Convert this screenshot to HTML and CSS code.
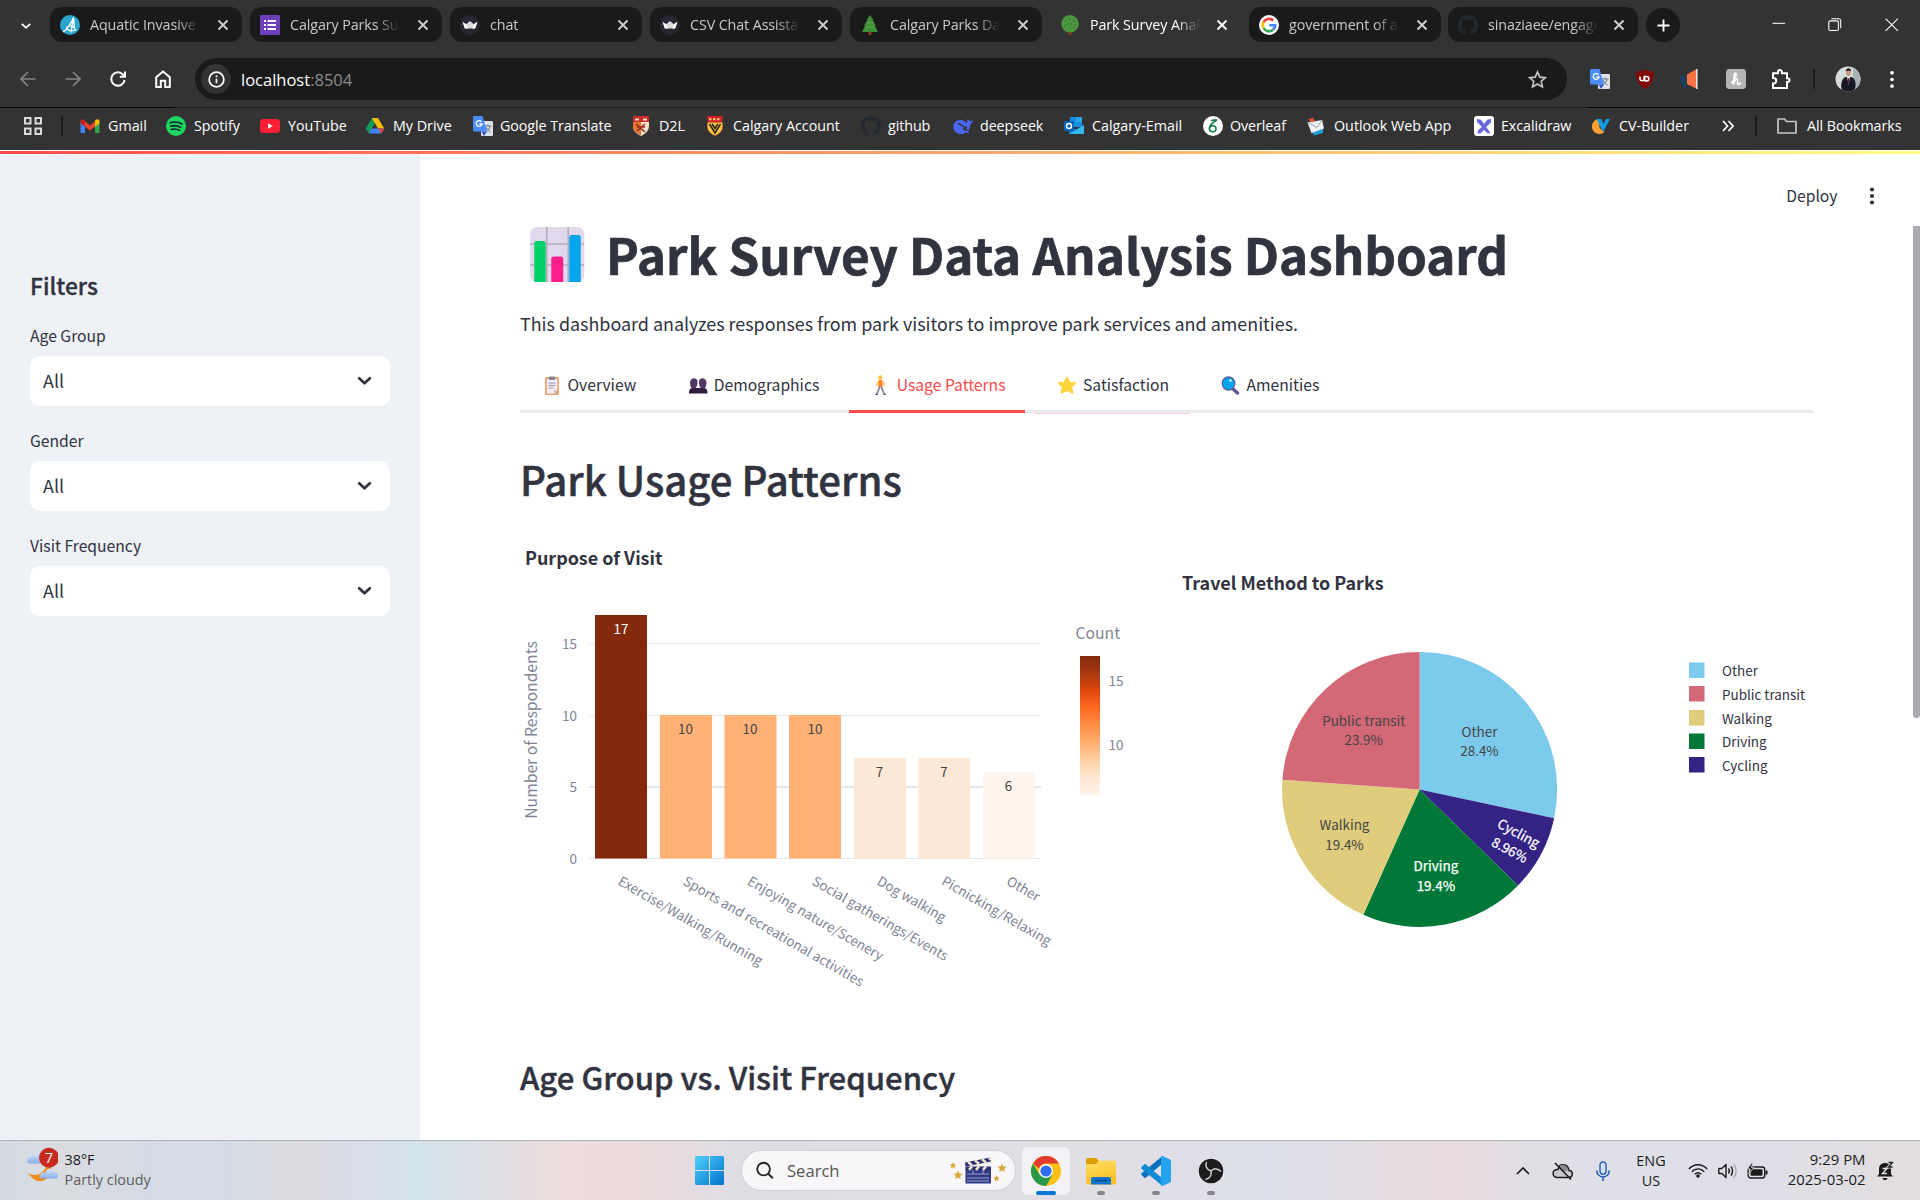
FILE: index.html
```html
<!DOCTYPE html>
<html lang="en">
<head>
<meta charset="utf-8">
<title>Park Survey Analysis</title>
<link rel="stylesheet" href="styles.css">
</head>
<body>
<svg class="defs" aria-hidden="true">
  <defs>
    <symbol id="i-close" viewBox="0 0 12 12"><path d="M1.5 1.5l9 9M10.5 1.5l-9 9" fill="none" stroke="currentColor" stroke-width="1.9"/></symbol>
    <symbol id="i-chev" viewBox="0 0 14 9"><path d="M2 2l5 4.6L12 2" fill="none" stroke="currentColor" stroke-width="2.6" stroke-linecap="round" stroke-linejoin="round"/></symbol>
    <symbol id="i-crown" viewBox="0 0 20 20"><circle cx="10" cy="10" r="10" fill="#262730"/><path d="M2.6 7l3.6 2.3L10 6l3.8 3.3L17.4 7l-2.3 6.6H4.9z" fill="#dcdcdc"/><path d="M2.6 7l3.6 2.3L7.8 13.6H4.9zM17.4 7l-3.6 2.3-1.6 4.3h2.9z" fill="#fff"/></symbol>
    <symbol id="i-github" viewBox="0 0 16 16"><path fill="#24292f" d="M8 0C3.58 0 0 3.58 0 8c0 3.54 2.29 6.53 5.47 7.59.4.07.55-.17.55-.38 0-.19-.01-.82-.01-1.49-2.01.37-2.53-.49-2.69-.94-.09-.23-.48-.94-.82-1.13-.28-.15-.68-.52-.01-.53.63-.01 1.08.58 1.23.82.72 1.21 1.87.87 2.33.66.07-.52.28-.87.51-1.07-1.78-.2-3.64-.89-3.64-3.95 0-.87.31-1.59.82-2.15-.08-.2-.36-1.02.08-2.12 0 0 .67-.21 2.2.82.64-.18 1.32-.27 2-.27s1.36.09 2 .27c1.53-1.04 2.2-.82 2.2-.82.44 1.1.16 1.92.08 2.12.51.56.82 1.27.82 2.15 0 3.07-1.87 3.75-3.65 3.95.29.25.54.73.54 1.48 0 1.07-.01 1.93-.01 2.2 0 .21.15.46.55.38A8.01 8.01 0 0 0 16 8c0-4.42-3.58-8-8-8z"/></symbol>
    <symbol id="i-translate" viewBox="0 0 20 20"><rect x="8" y="5" width="12" height="15" rx="1.2" fill="#dfe3e8"/><path d="M11.5 10h7M15 8.4V10M17.3 10c-.6 2.6-2.4 4.800-4.300 6M12.900 11.300c.9 2 2.600 3.800 4.600 4.700" stroke="#6f7f8c" stroke-width="1.1" fill="none"/><path d="M1.200 0h8.300l4.500 15.500H1.200A1.200 1.200 0 0 1 0 14.300V1.200A1.200 1.200 0 0 1 1.200 0z" fill="#4a8df6"/><path d="M8.500 15.500H14L11 20z" fill="#3457c5"/><path d="M8.400 5.600A2.900 2.900 0 1 0 9 8H6.300" stroke="#fff" stroke-width="1.300" fill="none"/></symbol>
    <symbol id="i-crest" viewBox="0 0 18 20"><path d="M1 0h16l-1 6 1 4c0 5-4 8-8 10-4-2-8-5-8-10l1-4z" fill="#d4202a"/><path d="M1.500 6.500h15V11c0 4-4 7-7.500 8.600C5.500 18 1.500 15 1.500 11z" fill="#f3c53a"/><path d="M3.500 8l5.500 9 5.500-9M6.200 8L9 12.500 11.800 8" stroke="#2a2114" stroke-width="1.500" fill="none"/><path d="M3 3.300h12" stroke="#f3d06a" stroke-width="2" stroke-dasharray="2.500 1.500"/></symbol>
    <symbol id="i-shield" viewBox="0 0 18 20"><path d="M1 0h16v10c0 5-4 8-8 10-4-2-8-5-8-10z" fill="#f1e3c8"/><path d="M1 0h16v6H1z" fill="#c52b2f"/><path d="M3 2.500h4v2H3zM11 2.500h4v2h-4z" fill="#f5d9b0"/><path d="M9 6v13.500C5 17.600 1.300 14.700 1 10V6z" fill="#e3762d"/><path d="M4 8l9 8M13 8l-8 7M5 11h8" stroke="#9b2a24" stroke-width="1.600"/></symbol>
    <linearGradient id="g-win" x1="0" y1="0" x2="1" y2="1"><stop offset="0" stop-color="#4fd0f8"/><stop offset="1" stop-color="#0072d0"/></linearGradient>
    <linearGradient id="g-fold" x1="0" y1="0" x2="0.300" y2="1"><stop offset="0" stop-color="#ffdf6b"/><stop offset="1" stop-color="#fdc022"/></linearGradient>
    <linearGradient id="g-heat" x1="0" y1="0" x2="0" y2="1"><stop offset="0" stop-color="#832a0d"/><stop offset=".125" stop-color="#a8390f"/><stop offset=".25" stop-color="#e0480c"/><stop offset=".375" stop-color="#fd6a20"/><stop offset=".5" stop-color="#ff9045"/><stop offset=".625" stop-color="#ffae70"/><stop offset=".75" stop-color="#fed0a5"/><stop offset=".875" stop-color="#fee6d0"/><stop offset="1" stop-color="#fff4ea"/></linearGradient>
    <linearGradient id="g-cloud" x1="0" y1="0" x2="0" y2="1"><stop offset="0" stop-color="#d7e6fb"/><stop offset="1" stop-color="#87abea"/></linearGradient>
  </defs>
</svg>

<header class="browser">
  <div class="tabstrip">
    <svg class="tab-search" viewBox="0 0 14 9"><path d="M2 2l5 4.600L12 2" fill="none" stroke="#fff" stroke-width="2.200"/></svg>
    <div class="tab"><svg class="fav" viewBox="0 0 20 20"><circle cx="10" cy="10" r="10" fill="#2ba5cc"/><path d="M3 17C7 15 12 7 13.500 2.500L11 17.500M13.500 2.500L14.500 13c-3-4-7-1.500-8 0 2 3 6 3.500 10 1.500" fill="none" stroke="#fff" stroke-width="1.300"/></svg><span class="tab-title">Aquatic Invasive Species</span><svg class="x"><use href="#i-close"/></svg></div>
    <div class="tab"><svg class="fav" viewBox="0 0 20 20"><rect width="20" height="20" rx="1.500" fill="#6f3fbb"/><path d="M7.500 6H16M7.500 10H16M7.500 14H16" stroke="#fff" stroke-width="1.900"/><path d="M4 6h2M4 10h2M4 14h2" stroke="#fff" stroke-width="1.900"/></svg><span class="tab-title">Calgary Parks Survey</span><svg class="x"><use href="#i-close"/></svg></div>
    <div class="tab"><svg class="fav"><use href="#i-crown"/></svg><span class="tab-title">chat</span><svg class="x"><use href="#i-close"/></svg></div>
    <div class="tab"><svg class="fav"><use href="#i-crown"/></svg><span class="tab-title">CSV Chat Assistant</span><svg class="x"><use href="#i-close"/></svg></div>
    <div class="tab"><svg class="fav" viewBox="0 0 20 20"><path d="M8.500 16h3v4h-3z" fill="#8c3a1f"/><path d="M10 0l3.500 5-1 .3 3.500 5-1.300.3L18 17H2l3.300-6.400-1.300-.3 3.500-5-1-.3z" fill="#3f8f37"/><path d="M7 7.500h6M5.500 12h9" stroke="#6cae50" stroke-width=".8"/></svg><span class="tab-title">Calgary Parks Dashboard</span><svg class="x"><use href="#i-close"/></svg></div>
    <div class="tab active"><svg class="fav" viewBox="0 0 20 20"><path d="M8.500 14h3v6h-3z" fill="#8c2f1b"/><circle cx="10" cy="8.800" r="8.800" fill="#4c963f"/><path d="M5 6h1M9 4h1M13 6h1M7 9h1M11 9h1M15 10h1M4 11h1M9 13h1M13 13h1" stroke="#2f7530" stroke-width="1.300"/></svg><span class="tab-title">Park Survey Analysis</span><svg class="x"><use href="#i-close"/></svg></div>
    <div class="tab"><svg class="fav" viewBox="0 0 20 20"><circle cx="10" cy="10" r="10" fill="#fff"/><g fill="none" stroke-width="2.600"><path d="M14.200 5.500A6.200 6.200 0 0 0 4.600 7" stroke="#ea4335"/><path d="M4.600 7a6.200 6.200 0 0 0 0 6" stroke="#fbbc05"/><path d="M4.600 13a6.200 6.200 0 0 0 9.400 1.800" stroke="#34a853"/><path d="M14 14.800A6.200 6.200 0 0 0 16.200 10.200H10.300" stroke="#4285f4"/></g></svg><span class="tab-title">government of alberta</span><svg class="x"><use href="#i-close"/></svg></div>
    <div class="tab last"><svg class="fav"><use href="#i-github"/></svg><span class="tab-title">sinaziaee/engage</span><svg class="x"><use href="#i-close"/></svg></div>
    <div class="newtab"><svg viewBox="0 0 14 14"><path d="M7 .5v13M.5 7h13" stroke="#fff" stroke-width="2"/></svg></div>
    <div class="winbtns">
      <svg viewBox="0 0 14 14"><path d="M.5 5.500h13" stroke="#fff" stroke-width="1.100"/></svg>
      <svg viewBox="0 0 14 14"><rect x=".8" y="3" width="10" height="10" rx="1.500" fill="none" stroke="#fff" stroke-width="1.100"/><path d="M3.500.8h7.500a2.200 2.200 0 0 1 2.200 2.200v7.500" fill="none" stroke="#fff" stroke-width="1.100"/></svg>
      <svg viewBox="0 0 14 14"><path d="M.6.600l12.800 12.800M13.400.6L.6 13.400" stroke="#fff" stroke-width="1.100"/></svg>
    </div>
  </div>

  <div class="toolbar">
    <svg class="nav dim" viewBox="0 0 18 18"><path d="M16.500 9H2.500M9 2L2 9l7 7" /></svg>
    <svg class="nav dim" viewBox="0 0 18 18"><path d="M1.500 9h14M9 2l7 7-7 7"/></svg>
    <svg class="nav" viewBox="0 0 18 18"><path d="M15.600 10A6.700 6.700 0 1 1 14 4.600l1.700 1.800M16 1.500v5.200h-5.200"/></svg>
    <svg class="nav home" viewBox="0 0 18 18"><path d="M2.200 17V7.200L9 1.600l6.800 5.600V17h-4.600v-6.200H6.800V17z"/></svg>
    <div class="omnibox">
      <span class="site-info"><svg viewBox="0 0 18 18"><circle cx="9" cy="9" r="7.800" fill="none" stroke="#fff" stroke-width="1.800"/><path d="M9 8v5" stroke="#fff" stroke-width="1.800"/><circle cx="9" cy="5.500" r="1.100" fill="#fff"/></svg></span>
      <span class="url">localhost<span>:8504</span></span>
      <svg class="bookmark-star" viewBox="0 0 20 20"><path d="M10 2l2.400 5.500 6 .5-4.500 4 1.300 5.800L10 14.700l-5.200 3.100L6.100 12 1.600 8l6-.5z" fill="none" stroke="#c7c7c7" stroke-width="1.700"/></svg>
    </div>
    <div class="extensions">
      <svg viewBox="0 0 20 20"><use href="#i-translate"/></svg>
      <svg viewBox="0 0 20 20"><path d="M10 0c3 2 6 2.500 9 2.600 0 8-2 14-9 17.400C3 16.600 1 10.600 1 2.600 4 2.500 7 2 10 0z" fill="#800a0a"/><path d="M5 7.500v2.300a2 2 0 0 0 4 0V7.500M9.800 12.300V7.600h1.800a2.200 2.200 0 0 1 0 4.500H9.500" fill="none" stroke="#fff" stroke-width="1.500"/></svg>
      <svg class="horn" viewBox="0 0 20 20"><path d="M9.500 6v9H8v4.500H4.500V15A4.600 4.600 0 0 1 5 6z" fill="#1f3d58"/><path d="M9 5.500L18 .5v19L9 15z" fill="#ff7244"/><path d="M18.800 0v20" stroke="#e8eef4" stroke-width="1.500"/></svg>
      <svg viewBox="0 0 20 20"><rect width="20" height="20" rx="3.500" fill="#b5b5b5"/><path d="M5.500 14C8 11 11.500 6 9.800 4.200 8 3.500 7.500 10 7.500 16c.5-3.500 2-6.500 3.500-6 1.500.6-.5 5 1 5.500 1 .2 2-.8 2.800-2" fill="none" stroke="#fff" stroke-width="1.600"/></svg>
      <svg viewBox="0 0 20 20"><path d="M2 4.200h5V3a1.900 1.900 0 0 1 3.900 0v1.200H16v5h.6a1.900 1.900 0 0 1 0 3.800H16V19H2v-4.500h.5a2.500 2.500 0 0 0 0-5.500H2z" fill="none" stroke="#fff" stroke-width="2"/></svg>
      <i class="vsep"></i>
      <svg class="avatar" viewBox="0 0 26 26"><clipPath id="c-av"><circle cx="13" cy="13" r="12.500"/></clipPath><g clip-path="url(#c-av)"><path d="M0 0h26v26H0z" fill="#d9dcdc"/><path d="M18 0h8v26h-8z" fill="#aab2b5"/><path d="M7 26c0-3-1.500-5-.5-9 .500-3 1.500-5 4-6h6c2.500 1 3.500 3 4 6 .5 4-1 6-1 9z" fill="#151a24"/><path d="M12 10.500h3l-1.500 8z" fill="#fff"/><path d="M13.500 12v5" stroke="#7a1f28" stroke-width="1"/><ellipse cx="13.500" cy="6.800" rx="2.400" ry="3.400" fill="#c99a80"/><path d="M10.800 5.500c0-4.500 5.400-4.500 5.400 0-1.500-1.500-4-1.500-5.400 0z" fill="#1b1412"/></g></svg>
      <svg class="kebab" viewBox="0 0 6 20"><circle cx="3" cy="3" r="1.900"/><circle cx="3" cy="10" r="1.900"/><circle cx="3" cy="17" r="1.900"/></svg>
    </div>
  </div>

  <nav class="bookmarks">
    <svg class="apps" viewBox="0 0 18 18"><path d="M1 1h5.500v5.500H1zM11.500 1H17v5.500h-5.500zM1 11.500h5.500V17H1zM11.500 11.500H17V17h-5.500z" fill="none" stroke="#dcdcdc" stroke-width="2"/></svg>
    <i class="vsep"></i>
    <div class="bm"><svg viewBox="0 0 20 20"><path d="M.5 5v12H5V9.500L.5 6z" fill="#4285f4"/><path d="M19.500 5v12H15V9.500L19.500 6z" fill="#34a853"/><path d="M5 5.500l5 4 5-4v5.200l-5 3.800-5-3.800z" fill="#ea4335"/><path d="M.5 5.500C.5 3 3 2.500 5 4.500v6.200L.5 7.300z" fill="#c5221f"/><path d="M19.500 5.500C19.500 3 17 2.500 15 4.500v6.200l4.500-3.400z" fill="#fbbc04"/></svg>Gmail</div>
    <div class="bm"><svg viewBox="0 0 20 20"><circle cx="10" cy="10" r="10" fill="#1ed760"/><path d="M4 6.800c4-1.200 8.600-.8 12 1.200M4.600 10.200c3.500-1 7.200-.6 10.200 1.200M5.200 13.400c3-.8 5.800-.5 8.400 1" fill="none" stroke="#123" stroke-width="1.600" stroke-linecap="round"/></svg>Spotify</div>
    <div class="bm"><svg viewBox="0 0 20 20"><rect y="3" width="20" height="14" rx="3.500" fill="#ff1f34"/><path d="M8 7.300v5.400l4.800-2.700z" fill="#fff"/></svg>YouTube</div>
    <div class="bm"><svg viewBox="0 0 20 20"><path d="M7 2h6L6.500 13 3.800 17.500.8 12.600z" fill="#0f9d58"/><path d="M7 2h6l6.200 10.600H13z" fill="#fbbc04"/><path d="M6.600 12.600h12.600l-3 4.900H3.800z" fill="#4285f4"/><path d="M13 12.600h6.200l-3 4.900z" fill="#ea4335"/></svg>My Drive</div>
    <div class="bm tight"><svg><use href="#i-translate"/></svg>Google Translate</div>
    <div class="bm"><svg><use href="#i-shield"/></svg>D2L</div>
    <div class="bm"><svg><use href="#i-crest"/></svg>Calgary Account</div>
    <div class="bm tight"><svg><use href="#i-github"/></svg>github</div>
    <div class="bm tight"><svg viewBox="0 0 20 20"><path d="M19.800 4c-1 .9-2.200 1.100-3.300.7-.6-1-1.600-1.400-2.600-1.200.5 1.300.9 2.500.2 3.300C12 6 10 3.500 7.500 4 3 4 .2 7 .3 11c.2 4.500 3.700 7 7.700 7 2.200 0 3.700-.6 4.800-1.500 1.200.6 2.700.9 4 .5-1.200-.4-1.800-1.100-1.800-2 1.600-2 2.200-4.600 2.300-6.800 1.500-.8 2.500-2.200 2.500-4.200z" fill="#4a66f5"/><path d="M5 7.500c4 .5 6 3.500 8.500 6.500-1.800-.2-2.500-.8-3.300-1.800M12 10.500c1 0 1.500.5 1.500 1.500" fill="none" stroke="#333" stroke-width="1.500"/></svg>deepseek</div>
    <div class="bm"><svg viewBox="0 0 20 20"><path d="M6 1h12v10H6z" fill="#1490df"/><path d="M12 1h6v5h-6z" fill="#28a8ea"/><path d="M5 9l7.500 4.500L20 9v9H5z" fill="#1374c9"/><path d="M5 18l15-9v9z" fill="#35b8f1"/><rect y="5" width="10" height="10" rx="1" fill="#0364b8"/><circle cx="5" cy="10" r="2.500" fill="none" stroke="#fff" stroke-width="1.400"/></svg>Calgary-Email</div>
    <div class="bm tight"><svg viewBox="0 0 20 20"><circle cx="10" cy="10" r="10" fill="#fff"/><ellipse cx="9.700" cy="12.800" rx="3.300" ry="3" fill="none" stroke="#137a4b" stroke-width="1.500"/><path d="M6.500 12.500C6.500 8.500 9.500 6.500 14 4M14 4c-2.500.2-4.500-.5-6 1" fill="none" stroke="#137a4b" stroke-width="1.500"/></svg>Overleaf</div>
    <div class="bm"><svg viewBox="0 0 20 20"><path d="M4 13l13-4v8l-9 2.500z" fill="#1fa0dc"/><path d="M1.500 6.500L16 4l2 8.500L5.500 17z" fill="#eef1f4"/><path d="M1.500 6.500l9.500 5L16 4" stroke="#9aa6b0" fill="none" stroke-width="1"/><path d="M2 3l3 3 4-1-2.500-3.500L4 3z" fill="#e8502c"/></svg>Outlook Web App</div>
    <div class="bm tight"><svg viewBox="0 0 20 20"><rect width="20" height="20" rx="3" fill="#fff"/><path d="M3 3l4 .8L10 8l3.500-4.500L17 3l.2 3-5 5 3.300 4.500.5 2-2.500-.2L10 14l-3.500 3.500-3-.3.5-2.700 3.800-3.800L3 6z" fill="#6965db"/></svg>Excalidraw</div>
    <div class="bm"><svg viewBox="0 0 20 20"><path d="M8 3a7.500 7.500 0 1 0 5.500 13L8.500 12z" fill="#ff9f2e"/><path d="M5.500 3H10l2.500 5L15 3h4l-7 13z" fill="#109fe6"/></svg>CV-Builder</div>
    <svg class="more" viewBox="0 0 12 12"><path d="M1 1l4.500 5L1 11M6.500 1L11 6l-4.500 5" fill="none" stroke="#fff" stroke-width="1.700"/></svg>
    <i class="vsep"></i>
    <div class="bm all"><svg viewBox="0 0 20 20"><path d="M1 3h6.500l2 2.500H19V17H1z" fill="none" stroke="#c7c7c7" stroke-width="1.700" stroke-linejoin="round"/></svg>All Bookmarks</div>
  </nav>
</header>

<div class="decoration"></div>

<div class="app">
  <aside class="sidebar">
    <h2>Filters</h2>
    <div class="field"><label>Age Group</label><div class="select">All<svg><use href="#i-chev"/></svg></div></div>
    <div class="field"><label>Gender</label><div class="select">All<svg><use href="#i-chev"/></svg></div></div>
    <div class="field"><label>Visit Frequency</label><div class="select">All<svg><use href="#i-chev"/></svg></div></div>
  </aside>

  <main class="main">
    <div class="app-header"><span>Deploy</span><svg class="kebab" viewBox="0 0 6 20"><circle cx="3" cy="3.500" r="2.100"/><circle cx="3" cy="10" r="2.100"/><circle cx="3" cy="16.500" r="2.100"/></svg></div>
    <div class="content">
      <h1><svg viewBox="0 0 54 55"><rect width="54" height="55" rx="7" fill="#e1d8ec"/><path d="M16.500 0v55M38 0v55M0 17h54M0 38h54" stroke="#b4acbc" stroke-width="1.600"/><path d="M4 55V16.500a2.500 2.500 0 0 1 2.500-2.500h6.500a2.500 2.500 0 0 1 2.500 2.500V55z" fill="#00d26a"/><path d="M21 55V32a2.500 2.500 0 0 1 2.500-2.500h7A2.500 2.500 0 0 1 33 32v23z" fill="#ff1f8c"/><path d="M39 55V10.500A2.500 2.500 0 0 1 41.500 8h6.500a2.500 2.500 0 0 1 2.500 2.500V55z" fill="#00a6ed"/></svg><span>Park Survey Data Analysis Dashboard</span></h1>
      <p class="intro">This dashboard analyzes responses from park visitors to improve park services and amenities.</p>
      <div class="page-tabs">
        <div class="ptab"><svg viewBox="0 0 24 20"><rect x="5" y="2" width="14" height="18" rx="1.500" fill="#e8a468"/><path d="M6.800 4h10.500v11l-3 3.500H6.800z" fill="#f3eef8"/><path d="M17.300 14.500l-3.500.5v3.500z" fill="#c3b8cf"/><path d="M9 1.500h6V5H9z" fill="#8b8492"/><path d="M8.500 8h7M8.500 10.500h7M8.500 13h5" stroke="#998ea3" stroke-width="1"/></svg>Overview</div>
        <div class="ptab"><svg viewBox="0 0 24 20"><path d="M3 18.500c0-4 1.200-5.500 4-5.500h10.500c2.800 0 4 1.500 4 5.500z" fill="#321b41"/><path d="M4 8c0-6 7.500-6 7.500-1 0 3-1 6.500-3.700 6.500S4.500 12 4 8z" fill="#533566"/><path d="M20.500 8c0-6-7.500-6-7.500-1 0 3 1 6.500 3.700 6.500S20 12 20.500 8z" fill="#533566"/></svg>Demographics</div>
        <div class="ptab selected"><svg viewBox="0 0 24 20"><circle cx="11.300" cy="2.500" r="2.200" fill="#ffc83d"/><path d="M9.800 5h3.200l.8 7H9.300z" fill="#ff822d"/><path d="M9.500 6L7.500 10.500M13.300 6l2.700 4.500" stroke="#ffb02e" stroke-width="1.300"/><path d="M10.700 12L8 18.500M12.300 12l2.700 6.500" stroke="#7f7a85" stroke-width="1.600"/><path d="M6.500 19.200h2.300M14.500 19.300h2.200" stroke="#533566" stroke-width="1.500"/></svg>Usage Patterns</div>
        <div class="ptab"><svg viewBox="0 0 24 20"><path d="M12 2.500l2.600 5 5.700.6-4 4.100 1.100 5.600L12 15.300l-5.400 2.500 1.100-5.600-4-4.100 5.700-.6z" fill="#fcd53f" stroke="#fcd53f" stroke-width="1.700" stroke-linejoin="round"/></svg>Satisfaction</div>
        <div class="ptab"><svg viewBox="0 0 24 20"><path d="M13.500 13.500l5 4.500" stroke="#635994" stroke-width="3.400" stroke-linecap="round"/><ellipse cx="9.500" cy="8.500" rx="6.300" ry="6.700" fill="#00a6ed" stroke="#635994" stroke-width="1.200"/><circle cx="11.500" cy="5.500" r="1.200" fill="#fff"/></svg>Amenities</div>
      </div>
      <h2>Park Usage Patterns</h2>

      <div class="charts">
        <svg class="chart" viewBox="520 540 641 480">
          <text class="title" x="525" y="565">Purpose of Visit</text>
          <g class="grid"><path d="M589 643.500h452M589 715.500h452M589 787h452M589 858.500h452"/><path d="M589 787h452" stroke-width="2"/></g>
          <g class="bars">
            <rect x="595" y="615" width="52" height="243.500" fill="#85290c"/>
            <rect x="660" y="715" width="52" height="143.500" fill="#ffb176"/>
            <rect x="724.500" y="715" width="52" height="143.500" fill="#ffb176"/>
            <rect x="789" y="715" width="52" height="143.500" fill="#ffb176"/>
            <rect x="854" y="758" width="52" height="100.500" fill="#fee9d8"/>
            <rect x="918.500" y="758" width="51.500" height="100.500" fill="#fee9d8"/>
            <rect x="983" y="772.500" width="51.500" height="86" fill="#fef4ec"/>
          </g>
          <g class="vals">
            <text x="621" y="633.500" fill="#fff">17</text><text x="685.500" y="733.500">10</text><text x="750" y="733.500">10</text><text x="815" y="733.500">10</text><text x="879.500" y="777">7</text><text x="944" y="777">7</text><text x="1008.500" y="791">6</text>
          </g>
          <g class="ticks end"><text x="577" y="649">15</text><text x="577" y="721">10</text><text x="577" y="792">5</text><text x="577" y="864">0</text></g>
          <text class="axis" transform="translate(537 730) rotate(-90)" text-anchor="middle">Number of Respondents</text>
          <g class="ticks">
            <text transform="translate(617 884) rotate(30)">Exercise/Walking/Running</text>
            <text transform="translate(682 884) rotate(30)">Sports and recreational activities</text>
            <text transform="translate(746.500 884) rotate(30)">Enjoying nature/Scenery</text>
            <text transform="translate(811 884) rotate(30)">Social gatherings/Events</text>
            <text transform="translate(876 884) rotate(30)">Dog walking</text>
            <text transform="translate(940.500 884) rotate(30)">Picnicking/Relaxing</text>
            <text transform="translate(1005.500 884) rotate(30)">Other</text>
          </g>
          <text class="axis" x="1075.500" y="639.300">Count</text>
          <rect x="1080" y="656" width="20" height="139" fill="url(#g-heat)"/>
          <g class="ticks"><text x="1108.500" y="686">15</text><text x="1108.500" y="750">10</text></g>
        </svg>

        <svg class="chart" viewBox="1172 540 641 480">
          <text class="title" x="1182" y="590">Travel Method to Parks</text>
          <path d="M1419.600 789.400V651.900A137.500 137.500 0 0 1 1554.100 818.200z" fill="#7dcbec"/>
          <path d="M1419.600 789.400L1554.100 818.200A137.500 137.500 0 0 1 1518 885.500z" fill="#342284"/>
          <path d="M1419.600 789.400L1518 885.500A137.500 137.500 0 0 1 1363.300 914.800z" fill="#007938"/>
          <path d="M1419.600 789.400L1363.300 914.800A137.500 137.500 0 0 1 1282.400 779.700z" fill="#dfcc7c"/>
          <path d="M1419.600 789.400L1282.400 779.700A137.500 137.500 0 0 1 1419.600 651.900z" fill="#d36876"/>
          <g class="vals">
            <text x="1479.500" y="737.300">Other</text><text x="1479.500" y="756">28.4%</text>
            <text x="1363.700" y="726.300">Public transit</text><text x="1363.700" y="745.300">23.9%</text>
            <text x="1344.500" y="830.300">Walking</text><text x="1344.500" y="850">19.4%</text>
            <g class="on-dark"><text x="1435.900" y="871">Driving</text><text x="1435.900" y="891">19.4%</text>
            <g transform="translate(1514 842) rotate(28.200)"><text y="-5">Cycling</text><text y="14">8.96%</text></g></g>
          </g>
          <g class="legend">
            <rect x="1689" y="662.500" width="15.500" height="15.500" fill="#7dcbec"/><text x="1722" y="675.700">Other</text>
            <rect x="1689" y="686" width="15.500" height="15.500" fill="#d36876"/><text x="1722" y="699.800">Public transit</text>
            <rect x="1689" y="710" width="15.500" height="15.500" fill="#dfcc7c"/><text x="1722" y="723.800">Walking</text>
            <rect x="1689" y="733.500" width="15.500" height="15.500" fill="#007938"/><text x="1722" y="747.300">Driving</text>
            <rect x="1689" y="757" width="15.500" height="15.500" fill="#342284"/><text x="1722" y="771.300">Cycling</text>
          </g>
        </svg>
      </div>
      <h3>Age Group vs. Visit Frequency</h3>
    </div>
    <div class="scrollbar"></div>
  </main>
</div>

<footer class="taskbar">
  <div class="weather">
    <svg viewBox="0 0 34 34"><path d="M6 15.500h10V9c-1-5-8-5-9 0-5 0-5 6.500-1 6.500z" fill="url(#g-cloud)"/><path d="M25 17c6 6 0 16-9 16-5 0-8-2.500-12-8 5 3 14 4 19-8z" fill="#ee8a1d"/><path d="M17 30.500h14.500c4-1 3-6-1-6-1.500-5-8-5-9 0-5-.500-8 4-4.500 6z" fill="url(#g-cloud)"/><circle cx="25" cy="9.700" r="10" fill="#c42b1c"/></svg>
    <b class="badge">7</b>
    <div><span>38°F</span><span class="muted">Partly cloudy</span></div>
  </div>
  <div class="dock">
    <svg class="start" viewBox="0 0 29 29"><path d="M0 1.500A1.500 1.500 0 0 1 1.500 0H14v14H0zM15 0h12.500A1.500 1.500 0 0 1 29 1.500V14H15zM0 15h14v14H1.500A1.500 1.500 0 0 1 0 27.500zM15 15h14v12.500a1.500 1.500 0 0 1-1.500 1.500H15z" fill="url(#g-win)"/></svg>
    <div class="search">
      <svg class="lens" viewBox="0 0 19 19"><circle cx="8" cy="8" r="6.700" fill="none" stroke="#222" stroke-width="1.900"/><path d="M12.800 12.800l5 5" stroke="#222" stroke-width="2.200"/></svg>
      <span>Search</span>
      <svg class="clap" viewBox="0 0 56 28"><g fill="#dba83a"><path d="M3 5l1 2.200 2.300.3-1.700 1.600.5 2.400L3 10.300.9 11.500l.5-2.400L-.3 7.500l2.300-.3z"/><path d="M8 13.500l1.400 2.900 3.100.4-2.300 2.200.6 3.100L8 20.600l-2.800 1.500.6-3.100-2.300-2.200 3.100-.4z"/><path d="M52 6.500l1.400 2.900 3.100.4-2.300 2.200.6 3.100-2.800-1.500-2.800 1.500.6-3.100-2.300-2.200 3.100-.4z"/><path d="M46.500 18l1 2.200 2.300.3-1.700 1.600.5 2.400-2.100-1.200-2.100 1.200.5-2.400-1.700-1.600 2.300-.3z"/></g><path d="M15.500 12h25.500v14.500h-25.500z" fill="#303a86"/><path d="M17 17h22M17 21h22M17 24h22M23 13v4M33 13v4" stroke="#a5abd6" stroke-width=".9"/><path d="M15 5.500L40.500.5l.5 4-25.500 5z" fill="#2b2f70"/><path d="M15.500 9.500H41V13H15.500z" fill="#2b2f70"/><path d="M18 5l4 3.200M25 3.600l4 3.200M32 2.200l4 3.200M39 .8l2 2" stroke="#efe3cf" stroke-width="2.600"/><path d="M22 9.500l-3 3.300M29 9.500l-3 3.300M36 9.500l-3 3.300" stroke="#efe3cf" stroke-width="2.600"/></svg>
    </div>
    <div class="task current"><svg viewBox="0 0 30 30"><circle cx="15" cy="15" r="15" fill="#fbc116"/><path d="M2 7.500A15 15 0 0 0 15 30l6.500-11.200L15 15 8.500 18.800z" fill="#279847"/><path d="M2 7.500A15 15 0 0 1 28 7.500H15a7.500 7.500 0 0 0-7 5z" fill="#e33b2e"/><circle cx="15" cy="15" r="7" fill="#fff"/><circle cx="15" cy="15" r="5.600" fill="#2f6df0"/></svg></div>
    <div class="task"><svg viewBox="0 0 30 30"><path d="M0 4a2 2 0 0 1 2-2h8l3 3v5H0z" fill="#dd9d05"/><path d="M0 8h10l3-3.500h15.500A1.500 1.500 0 0 1 30 6v21a1.500 1.500 0 0 1-1.500 1.500h-27A1.500 1.500 0 0 1 0 27z" fill="url(#g-fold)"/><path d="M5 28.500V23a2 2 0 0 1 2-2h16a2 2 0 0 1 2 2v5.500z" fill="#0f72cc"/><path d="M9 24.500h12" stroke="#0b4c94" stroke-width="1.500" stroke-linecap="round"/></svg></div>
    <div class="task"><svg viewBox="0 0 30 30"><path d="M21.500 7.500L5 21.500c-.7.600-1.300.5-1.800 0L.8 19.300c-.8-.7-.7-1.500 0-2.200L21.500 0z" fill="#0870bd"/><path d="M21.500 22.500L5 8.500c-.7-.6-1.300-.5-1.800 0L.8 10.700c-.8.700-.7 1.500 0 2.200L21.500 30z" fill="#1089d6"/><path d="M21.500 0L28.500 3.200C29.500 3.700 30 4.300 30 5.300v19.400c0 1-.5 1.600-1.500 2.100l-7 3.200c-.8.200-1.500-.3-1.500-1V1c0-.8.700-1.200 1.500-1z" fill="#25a2f0"/></svg></div>
    <div class="task"><svg class="obs" viewBox="0 0 26 26"><circle cx="13" cy="13" r="13" fill="#f4f4f4"/><circle cx="13" cy="13" r="12.300" fill="#1c1c1f"/><g fill="none" stroke="#cfcfcf" stroke-width="1.500"><path d="M8.500 4c-1.500 4 0 7.500 4.500 9"/><path d="M8.500 4c-1.500 4 0 7.500 4.500 9" transform="rotate(120 13 13)"/><path d="M8.500 4c-1.500 4 0 7.500 4.500 9" transform="rotate(240 13 13)"/></g></svg></div>
  </div>
  <div class="tray">
    <svg class="t-caret" viewBox="0 0 14 8"><path d="M1 7l6-6 6 6" fill="none" stroke="#1b1b1b" stroke-width="1.700"/></svg>
    <svg class="t-cloud" viewBox="0 0 22 18"><path d="M5.500 15.500h11c5 0 5-7 .5-7C16 1 7 1 6 7.500c-6.500-.5-6.500 8-.5 8z" fill="#c9c9ce" stroke="#1b1b1b" stroke-width="1.500"/><path d="M7 5c2-3 7-3.500 9.500 3L12 10z" fill="#8a8a90"/><path d="M3 1l16 16.500" stroke="#1b1b1b" stroke-width="1.600"/></svg>
    <svg class="t-mic" viewBox="0 0 14 20"><rect x="4" y=".8" width="6" height="12.500" rx="3" fill="#cfe0f6" stroke="#1a56b8" stroke-width="1.300"/><path d="M.8 9.500c0 8.500 12.400 8.500 12.400 0M7 16v4" fill="none" stroke="#1a56b8" stroke-width="1.500"/></svg>
    <div class="t-lang"><span>ENG</span><span>US</span></div>
    <svg class="t-wifi" viewBox="0 0 20 15"><path d="M.8 6C6 .3 14 .3 19.200 6M3.800 8.700c3.500-3.800 8.900-3.800 12.400 0M6.700 11.300c2-2 4.600-2 6.600 0" fill="none" stroke="#1b1b1b" stroke-width="1.400"/><circle cx="10" cy="13" r="1.800" fill="#1b1b1b"/></svg>
    <svg class="t-vol" viewBox="0 0 20 16"><path d="M.8 5.500h3L8 1.500v13l-4.200-4h-3z" fill="none" stroke="#1b1b1b" stroke-width="1.400" stroke-linejoin="round"/><path d="M10.500 5.500c1 1.500 1 3.500 0 5M13 3.500c2 2.500 2 6.500 0 9" fill="none" stroke="#1b1b1b" stroke-width="1.400"/><path d="M15.700 1.500c3.300 3.500 3.300 9.500 0 13" fill="none" stroke="#a9a9ae" stroke-width="1.400"/></svg>
    <svg class="t-bat" viewBox="0 0 21 16"><rect x="1.200" y="4" width="16.500" height="11" rx="2.500" fill="none" stroke="#1b1b1b" stroke-width="1.400"/><rect x="3.500" y="6.300" width="12" height="6.400" rx="1" fill="#1b1b1b"/><path d="M18.500 7.500h2v4h-2z" fill="#1b1b1b"/><path d="M4.500 0L.5 6h2.700L1.800 11 7 4.300H4.200L6 0z" fill="#1b1b1b" stroke="#e0e0e5" stroke-width=".8"/></svg>
    <div class="t-clock"><span>9:29 PM</span><span>2025-03-02</span></div>
    <svg class="t-bell" viewBox="0 0 17 20"><path d="M2 13V8c0-8 12-8 12 0v5l2 2.500H0zM5.500 17h5c-.5 3-4.500 3-5 0z" fill="#1b1b1b"/><path d="M11.500 1.500h4l-4 4.500h4" fill="none" stroke="#e4e2e7" stroke-width="3"/><path d="M5.500 7.500h4.500l-4.500 5h4.500" fill="none" stroke="#e4e2e7" stroke-width="1.400"/><path d="M11.500 1.500h4l-4 4.500h4" fill="none" stroke="#1b1b1b" stroke-width="1.300"/></svg>
  </div>
</footer>
</body>
</html>
```
FILE: styles.css
```css
:root {
  --ui: "Open Sans", "Noto Sans", sans-serif;
  --app: "Noto Sans CJK SC", "Noto Sans", sans-serif;
  --ink: #31333f;
  --frame: #333333;
  --field: #1a1a1a;
}
* { box-sizing: border-box; }
body {
  margin: 0;
  width: 1920px;
  height: 1200px;
  overflow: hidden;
  display: flex;
  flex-direction: column;
  background: #fff;
  font-family: var(--app);
  color: var(--ink);
}
svg { display: block; flex: none; }
.defs { position: absolute; width: 0; height: 0; }

/* Browser chrome */
.browser { height: 150px; background: var(--frame); color: #fff; font: 14.3px/20px var(--ui); flex: none; }
.tabstrip { height: 50px; padding: 7px 0 0; display: flex; align-items: flex-start; }
.tab-search { width: 12px; height: 8px; margin: 15px 18px 0 20px; }
.tab {
  width: 192px; height: 35px; margin-right: 8px; padding: 0 13.500px 0 10px;
  display: flex; align-items: center; border-radius: 12px; background: var(--field); color: #c9c9c9;
}
.tab.active { background: none; color: #fff; width: 191px; }
.tab.last { width: 190px; margin-left: -1px; }
.fav { width: 20px; height: 20px; margin-right: 10px; }
.tab-title {
  width: 110px; overflow: hidden; white-space: nowrap; letter-spacing: -.1px;
  -webkit-mask-image: linear-gradient(90deg, #000 78%, transparent);
  mask-image: linear-gradient(90deg, #000 78%, transparent);
}
.x { width: 12px; height: 12px; margin-left: auto; color: #d0d0d0; }
.active .x { color: #fff; }
.newtab { width: 34px; height: 34px; margin-top: 1px; border-radius: 50%; background: var(--field); display: grid; place-items: center; }
.newtab svg { width: 13px; height: 13px; }
.winbtns { margin-left: auto; padding: 11px 22px 0 0; display: flex; gap: 43px; }
.winbtns svg { width: 13.500px; height: 13.500px; }

.toolbar { height: 57px; padding: 8px 0 7px 19px; display: flex; align-items: center; }
.nav { width: 18px; height: 18px; margin-right: 27px; fill: none; stroke: #fff; stroke-width: 2; }
.nav.dim { stroke: #868686; stroke-width: 1.700; }
.nav.home { margin-right: 23px; }
.omnibox { width: 1372px; height: 42px; padding: 0 20px 0 6px; border-radius: 21px; background: var(--field); display: flex; align-items: center; }
.site-info { width: 30px; height: 30px; border-radius: 50%; background: var(--frame); display: grid; place-items: center; }
.site-info svg { width: 17px; height: 17px; }
.url { margin-left: 10px; padding-top: 1px; font-size: 16.500px; }
.url span { color: #8c8c8c; }
.bookmark-star { width: 19px; height: 19px; margin-left: auto; }
.extensions { display: flex; align-items: center; margin-left: 23px; }
.extensions > svg { width: 20px; height: 20px; margin-right: 25.200px; }
.extensions > .horn { margin-left: -2px; margin-right: 27.200px; }
.vsep { display: block; width: 2px; height: 20px; background: var(--field); border-radius: 1px; }
.extensions .vsep { margin: 0 21px 0 -3px; }
.extensions .avatar { width: 26px; height: 26px; margin: 0 28px 0 -1px; }
.extensions .kebab { width: 6px; height: 19px; margin: 0; fill: #fff; }

.bookmarks {
  height: 43px; padding: 0 0 6px 24px;
  border-top: 1px solid #1e1e1e;
  border-image: linear-gradient(90deg, #000 176px, #202020 176px, #202020 1587px, #000 1587px) 1;
  display: grid; align-items: center;
  grid-template-columns: 37px 19px 86px 94px 105px 108px 158px 74px 156px 92px 111px 139px 103px 168px 117px 131px 33px 22px auto;
}
.bookmarks .apps { width: 18px; height: 18px; margin-left: -.500px; }
.bm { display: flex; align-items: center; gap: 8px; white-space: nowrap; }
.bm svg { width: 20px; height: 20px; }
.bm.tight { gap: 7px; letter-spacing: -.08px; }
.bm.all { gap: 10px; letter-spacing: -.06px; }
.more { width: 12px; height: 12px; }

.decoration { height: 4px; flex: none; border-top: 1px solid #fff; background: linear-gradient(90deg, #ff4b4b, #fffd80); }

/* Application */
.app { height: 986px; display: flex; flex: none; }
.sidebar { width: 420px; padding: 120px 30px 0; background: #eef1f6; }
.sidebar h2 { margin: 0 0 16px; font-size: 22.800px; line-height: 24px; font-weight: 500; -webkit-text-stroke: .3px var(--ink); }
.field { margin-bottom: 25px; }
.field label { display: block; height: 42px; line-height: 22px; padding-top: 11px; font-size: 15.700px; }
.field + .field { margin-top: -12px; }
.select { height: 50px; padding: 0 18px 0 13px; border-radius: 10px; background: #fff; display: flex; align-items: center; justify-content: space-between; font-size: 17.900px; line-height: 48px; padding-bottom: 2px; }
.select svg { width: 15px; height: 10px; margin-top: 2px; }

.main { width: 1500px; display: grid; grid-template-columns: 1493px 7px; grid-template-rows: 72px 1fr; }
.app-header { grid-column: 1 / 3; padding: 11px 45px 0 0; display: flex; align-items: center; justify-content: flex-end; gap: 31.500px; font-size: 15.700px; }
.app-header svg { width: 6px; height: 20px; fill: var(--ink); }
.content { padding: 0 0 0 100px; }
.scrollbar { height: 492px; background: #a9abb1; border-radius: 0 0 4px 4px; }
h1 { margin: 0; height: 60px; display: flex; align-items: center; font-size: 49.350px; line-height: 52px; font-weight: 700; white-space: nowrap; }
h1 span { padding-bottom: 5px; -webkit-text-stroke: .7px var(--ink); }
h1 svg { width: 54.500px; height: 55px; margin: -3px 21.500px 0 10px; }
.intro { margin: 19px 0 0; height: 36px; line-height: 36px; font-size: 17.920px; }
.page-tabs { width: 1293px; margin-top: 25px; height: 47px; display: flex; gap: 10px; border-bottom: 3px solid #eaeaec; }
.ptab { height: 47px; padding: 0 20px 10px 20px; display: flex; align-items: center; gap: 3.500px; font-size: 15.670px; white-space: nowrap; }
.ptab svg { width: 24px; height: 20px; margin-top: 1px; }
.ptab.selected { color: #ff4b4b; border-bottom: 3px solid #ff4b4b; padding-bottom: 7px; }
.ptab.selected + .ptab { box-shadow: 0 1px 0 #f7cdd1; }
.content h2 { margin: 43px 0 0; height: 50px; line-height: 46px; font-size: 40.130px; font-weight: 500; -webkit-text-stroke: .5px var(--ink); }
.charts { margin-top: 34px; display: flex; gap: 11px; }
.chart { width: 641px; height: 480px; overflow: visible; }
.chart text { font-family: var(--app); font-size: 13.450px; }
.chart .title { font-size: 17.930px; font-weight: 700; fill: var(--ink); }
.chart .axis { font-size: 15.730px; fill: #808495; }
.ticks text { fill: #808495; }
.end text { text-anchor: end; }
.vals { fill: #444; text-anchor: middle; }
.on-dark { fill: #fff; stroke: #fff; stroke-width: .25px; }
.legend { fill: var(--ink); }
.grid path { stroke: #e3e6ed; fill: none; shape-rendering: crispEdges; }
h3 { margin: 35px 0 0; height: 44px; line-height: 44px; font-size: 31.100px; font-weight: 500; -webkit-text-stroke: .4px var(--ink); }

/* Taskbar */
.taskbar {
  position: relative; z-index: 1;
  height: 60px; flex: none; display: grid; grid-template-columns: 695px 821px auto;
  border-top: 1px solid #b0b3b6; font: 14.400px/20px var(--ui); color: #1b1b1b;
  background: linear-gradient(90deg, #d3dbe3 0, #dadce0 60px, #d6dbe4 120px, #d3dce5 230px, #dcdadd 300px, #d8dce7 350px, #d4e4ec 420px, #e0dfe4 500px, #eddcdc 560px, #ebdbdc 640px, #dfdde4 730px, #e1dee4 1100px, #dcdfe9 1270px, #e6dce1 1400px, #e8dbdf 1460px, #dfdfe6 1540px, #dedfe8 1750px, #e2dddf 1920px);
}
.weather { position: relative; display: flex; padding: 6px 0 0 24px; gap: 6.500px; }
.weather > svg { width: 34px; height: 36px; }
.weather > div { padding-top: 2.500px; }
.weather span { display: block; line-height: 20px; }
.weather .muted { color: #5c5d60; }
.badge { position: absolute; left: 39px; top: 7px; width: 20px; text-align: center; font-weight: 400; font-size: 14px; color: #fff; }
.dock { display: flex; align-items: center; }
.start { width: 29px; height: 29px; }
.search { width: 273px; height: 39px; margin: 0 7px 0 18px; padding: 0 9px 0 14px; border-radius: 20px; background: #f8f6f9; box-shadow: 0 0 0 1px #d3d1d8; display: flex; align-items: center; font-size: 16.600px; color: #555; }
.lens { width: 18px; height: 19px; margin-right: 13px; }
.clap { width: 56px; height: 28px; margin-left: auto; overflow: visible; }
.task { position: relative; width: 48px; height: 48px; margin-right: 7px; display: grid; place-items: center; border-radius: 5px; }
.task svg { width: 30px; height: 30px; }
.task .obs { width: 26px; height: 26px; }
.task.current { background: #f3f1f5; box-shadow: 0 0 0 1px #dcdae0; }
.task::after { content: ""; position: absolute; left: 20px; bottom: 0; width: 8px; height: 4px; border-radius: 2px; background: #85858a; }
.task.current::after { left: 14px; width: 20px; background: #0078d4; }
.tray { display: flex; align-items: center; }
.tray span { display: block; line-height: 20px; }
.t-caret { width: 14px; height: 8px; }
.t-cloud { width: 22px; height: 18px; margin-left: 22px; }
.t-mic { width: 14px; height: 20px; margin-left: 22px; }
.t-lang { width: 40px; margin-left: 21px; text-align: center; }
.t-wifi { width: 20px; height: 15px; margin-left: 17px; }
.t-vol { width: 20px; height: 16px; margin-left: 10px; }
.t-bat { width: 21px; height: 16px; margin-left: 9px; }
.t-clock { width: 90px; margin: -3px 11.500px 0 7.500px; text-align: right; font-size: 14.900px; }
.t-bell { width: 17px; height: 20px; }
```
